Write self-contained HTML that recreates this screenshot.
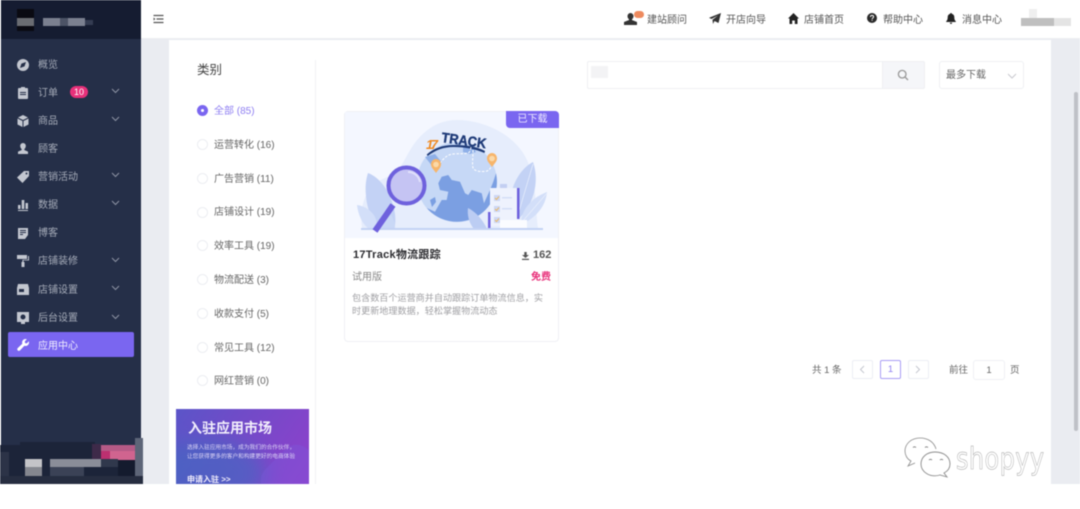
<!DOCTYPE html>
<html lang="zh">
<head>
<meta charset="utf-8">
<style>
*{box-sizing:border-box}
html,body{margin:0;padding:0;width:1080px;height:509px;overflow:hidden;background:#fff;font-family:"Liberation Sans","Noto Sans CJK SC",sans-serif}
.a{position:absolute}
#root{position:relative;width:1080px;height:509px;overflow:hidden;filter:blur(.4px)}
.t{position:absolute;white-space:nowrap;line-height:14px}
.m{color:#a5abb8;font-size:10px;left:38px}
.ic{position:absolute;fill:#c3c7d0}
.ch{position:absolute;left:111px;width:9px;height:6px}
.h{color:#555;font-size:10px}
.c{color:#666;font-size:10px;left:214px}
.r{position:absolute;left:197px;width:11px;height:11px;border-radius:50%;border:1px solid #eceef2;background:#fff}
.pg{position:absolute;top:360px;width:21px;height:19px;border:1px solid #eceef4;border-radius:2px;background:#fff}
</style>
</head>
<body>
<div id="root">
<!-- backgrounds -->
<div class="a" style="left:141px;top:39px;width:939px;height:445px;background:#eaecf1"></div>
<div class="a" style="left:169px;top:40px;width:882px;height:444px;background:#fff"></div>
<div class="a" style="left:141px;top:0;width:939px;height:39px;background:#fff;border-bottom:1px solid #eceef0"></div>
<div class="a" style="left:1074px;top:92px;width:4px;height:339px;border-radius:2px;background:#bfc1c7"></div>

<!-- sidebar -->
<div class="a" style="left:1px;top:0;width:140px;height:484px;background:#252f48"></div>
<div class="a" style="left:1px;top:0;width:140px;height:39px;background:#151c31"></div>
<div class="a" style="left:17px;top:9px;width:17px;height:22px;background:#0a0a12"></div>
<div class="a" style="left:17px;top:18px;width:17px;height:8px;background:#6a6c72"></div>
<div class="a" style="left:43px;top:18px;width:17px;height:8px;background:#7b8090"></div>
<div class="a" style="left:60px;top:18px;width:8px;height:8px;background:#4c5366"></div>
<div class="a" style="left:68px;top:18px;width:17px;height:8px;background:#7b8090"></div>
<div class="a" style="left:85px;top:20px;width:8px;height:5px;background:#343c52"></div>

<!-- sidebar items -->
<svg class="ic" style="left:17px;top:59px" width="12" height="12" viewBox="0 0 12 12"><path fill-rule="evenodd" d="M6 0a6 6 0 1 1 0 12A6 6 0 0 1 6 0zM9 3 4.400 4.600 3 9l4.500-1.600z"/></svg>
<div class="t m" style="top:59px">概览</div>
<svg class="ic" style="left:18px;top:87px" width="10" height="12" viewBox="0 0 10 12"><path fill-rule="evenodd" d="M3 0h4v1h2a1 1 0 0 1 1 1v9a1 1 0 0 1-1 1H1a1 1 0 0 1-1-1V2a1 1 0 0 1 1-1h2zM2 5v1h6V5zm0 2v1h6V7z"/></svg>
<div class="t m" style="top:87px">订单</div>
<div class="a" style="left:70px;top:86px;width:18px;height:12px;border-radius:6px;background:#e8307a;color:#fff;font-size:9px;line-height:12px;text-align:center">10</div>
<svg class="ch" style="top:88px" viewBox="0 0 9 6"><path d="M1 1l3.500 3.500L8 1" fill="none" stroke="#8d93a3" stroke-width="1"/></svg>
<svg class="ic" style="left:17px;top:115px" width="12" height="12" viewBox="0 0 12 12"><path d="M6 0l5 2.500L6 5 1 2.500zM.5 3.500l5 2.500v6L.5 9.500zM11.500 3.500 6.500 6v6l5-2.500z"/></svg>
<div class="t m" style="top:115px">商品</div>
<svg class="ch" style="top:116px" viewBox="0 0 9 6"><path d="M1 1l3.500 3.500L8 1" fill="none" stroke="#8d93a3" stroke-width="1"/></svg>
<svg class="ic" style="left:18px;top:143px" width="10" height="11" viewBox="0 0 10 11"><path d="M5 0a2.800 2.800 0 0 1 2.800 3c0 1.500-.8 2.600-1.500 3.200v.8L10 8.600V11H0V8.600L3.700 7v-.8C3 5.600 2.200 4.500 2.200 3A2.800 2.800 0 0 1 5 0z"/></svg>
<div class="t m" style="top:143px">顾客</div>
<svg class="ic" style="left:17px;top:171px" width="12" height="12" viewBox="0 0 12 12"><path fill-rule="evenodd" d="M7 0h5v5l-6.500 7L0 6.500zM9.500 1.500a1 1 0 1 0 0 2 1 1 0 0 0 0-2z"/></svg>
<div class="t m" style="top:171px">营销活动</div>
<svg class="ch" style="top:172px" viewBox="0 0 9 6"><path d="M1 1l3.500 3.500L8 1" fill="none" stroke="#8d93a3" stroke-width="1"/></svg>
<svg class="ic" style="left:18px;top:199px" width="10" height="12" viewBox="0 0 10 12"><path d="M0 6h2.500v4H0zM3.700 1h2.600v9H3.700zM7.500 4H10v6H7.500zM0 11h10v1H0z"/></svg>
<div class="t m" style="top:199px">数据</div>
<svg class="ch" style="top:200px" viewBox="0 0 9 6"><path d="M1 1l3.500 3.500L8 1" fill="none" stroke="#8d93a3" stroke-width="1"/></svg>
<svg class="ic" style="left:18px;top:228px" width="10" height="11" viewBox="0 0 10 11"><path fill-rule="evenodd" d="M0 0h10v7L7 11H0zM2 2v1h6V2zm0 2v1h6V4zm0 2v1h3V6z"/></svg>
<div class="t m" style="top:227px">博客</div>
<svg class="ic" style="left:17px;top:255px" width="12" height="12" viewBox="0 0 12 12"><path d="M0 0h10v4H0zM11 1h1v4.500H6.500V7H7.500v5h-3V7h.9V4.800H11z"/></svg>
<div class="t m" style="top:255px">店铺装修</div>
<svg class="ch" style="top:257px" viewBox="0 0 9 6"><path d="M1 1l3.500 3.500L8 1" fill="none" stroke="#8d93a3" stroke-width="1"/></svg>
<svg class="ic" style="left:17px;top:284px" width="12" height="11" viewBox="0 0 12 11"><path fill-rule="evenodd" d="M1 0h10l1 4v7H0V4zM2 5v3h5V5z"/></svg>
<div class="t m" style="top:284px">店铺设置</div>
<svg class="ch" style="top:285px" viewBox="0 0 9 6"><path d="M1 1l3.500 3.500L8 1" fill="none" stroke="#8d93a3" stroke-width="1"/></svg>
<svg class="ic" style="left:17px;top:312px" width="12" height="12" viewBox="0 0 12 12"><path fill-rule="evenodd" d="M0 0h12v10H8v2H4v-2H0zM6 2.500a2.500 2.500 0 1 0 0 5 2.500 2.500 0 0 0 0-5z"/></svg>
<div class="t m" style="top:312px">后台设置</div>
<svg class="ch" style="top:314px" viewBox="0 0 9 6"><path d="M1 1l3.500 3.500L8 1" fill="none" stroke="#8d93a3" stroke-width="1"/></svg>

<div class="a" style="left:8px;top:332px;width:126px;height:25px;border-radius:2px;background:#7a66f0"></div>
<svg class="a" style="left:17px;top:339px" width="12" height="12" viewBox="0 0 12 12"><path fill="#fff" d="M8.500 0c.6 0 1 .1 1.400.3L7.800 2.400l.3 1.700 1.700.3 2-2.100c.2.400.2.900.2 1.300a3.400 3.400 0 0 1-4.600 3.200L3 11.400c-.6.600-1.700.6-2.300 0s-.6-1.700 0-2.300l4.600-4.400A3.500 3.500 0 0 1 8.500 0z"/></svg>
<div class="t" style="left:38px;top:340px;color:#f1eeff;font-size:10px">应用中心</div>

<!-- sidebar bottom mosaic -->
<div class="a" style="left:0;top:445px;width:143px;height:39px;background:#1c2439"></div>
<div class="a" style="left:20px;top:442px;width:75px;height:8px;background:#1c2439"></div>
<div class="a" style="left:92px;top:444px;width:9px;height:16px;background:#3e2a49"></div>
<div class="a" style="left:101px;top:445px;width:42px;height:15px;background:#b55a86"></div>
<div class="a" style="left:101px;top:451px;width:9px;height:9px;background:#bc3070"></div>
<div class="a" style="left:110px;top:451px;width:33px;height:9px;background:#d0648f"></div>
<div class="a" style="left:118px;top:460px;width:17px;height:16px;background:#141b2e"></div>
<div class="a" style="left:135px;top:438px;width:8px;height:46px;background:#5d6578"></div>
<div class="a" style="left:0;top:452px;width:9px;height:32px;background:#2c3347"></div>
<div class="a" style="left:25px;top:459px;width:17px;height:8px;background:#c4c4c8"></div>
<div class="a" style="left:25px;top:467px;width:17px;height:9px;background:#85878f"></div>
<div class="a" style="left:50px;top:459px;width:51px;height:8px;background:#8a8d98"></div>
<div class="a" style="left:50px;top:467px;width:34px;height:9px;background:#3b4256"></div>
<div class="a" style="left:101px;top:459px;width:17px;height:8px;background:#30384c"></div>
<div class="a" style="left:0;top:476px;width:143px;height:8px;background:#262d40"></div>

<!-- header -->
<svg class="a" style="left:153px;top:14px" width="11" height="10" viewBox="0 0 10 10"><path d="M0 1.500h10M3 5h7M0 8.500h10" stroke="#555" stroke-width="1.300" fill="none"/><path d="M0 3.500 2 5 0 6.500z" fill="#555"/></svg>

<svg class="a" style="left:624px;top:13px" width="13" height="12" viewBox="0 0 13 12"><path fill="#333" d="M6.500 0a3 3 0 0 1 3 3.200c0 1.300-.7 2.500-1.500 3v.8l5 2V12H0V9l5-2v-.8c-.8-.5-1.500-1.700-1.500-3A3 3 0 0 1 6.500 0z"/></svg>
<div class="a" style="left:634px;top:11px;width:10px;height:7px;border-radius:4px;background:#ee8a5e"></div>
<div class="t h" style="left:647px;top:14px">建站顾问</div>
<svg class="a" style="left:709px;top:13px" width="12" height="11" viewBox="0 0 12 11"><path fill="#333" d="M12 0 9.500 10 5.500 8 4 11 3.500 6.800 9 2.500 2.500 6 0 4.800z"/></svg>
<div class="t h" style="left:726px;top:14px">开店向导</div>
<svg class="a" style="left:788px;top:13px" width="11" height="11" viewBox="0 0 11 11"><path fill="#222" d="M5.500 0 11 5.500H9.500V11H6.800V7.500H4.200V11H1.500V5.500H0z"/></svg>
<div class="t h" style="left:804px;top:14px">店铺首页</div>
<svg class="a" style="left:867px;top:13px" width="10" height="10" viewBox="0 0 10 10"><circle cx="5" cy="5" r="5" fill="#2a2a2a"/><path d="M3.400 3.900C3.500 2.900 4.100 2.400 5 2.400s1.600.6 1.600 1.400c0 1.200-1.500 1.200-1.500 2.300" fill="none" stroke="#fff" stroke-width="1"/><rect x="4.600" y="6.800" width="1" height="1" fill="#fff"/></svg>
<div class="t h" style="left:883px;top:14px">帮助中心</div>
<svg class="a" style="left:946px;top:13px" width="10" height="11" viewBox="0 0 10 11"><path fill="#222" d="M5 0c.5 0 .8.300.8.800C7.400 1.200 8.300 2.500 8.300 4c0 2.500.6 3.500 1.500 4.300V9H.2v-.7C1.100 7.500 1.700 6.500 1.700 4 1.700 2.500 2.600 1.200 4.200.8 4.200.3 4.500 0 5 0zM3.800 9.600h2.400C6.100 10.400 5.600 11 5 11s-1.100-.6-1.200-1.400z"/></svg>
<div class="t h" style="left:962px;top:14px">消息中心</div>
<div class="a" style="left:1021px;top:18px;width:33px;height:8px;background:#bfbfbf"></div>
<div class="a" style="left:1029px;top:9px;width:8px;height:9px;background:#efefef"></div>
<div class="a" style="left:1054px;top:18px;width:17px;height:8px;background:#e4e4e4"></div>

<!-- category column -->
<div class="a" style="left:315px;top:60px;width:1px;height:424px;background:#f1f2f4"></div>
<div class="t" style="left:197px;top:63px;color:#444;font-size:12.500px">类别</div>

<div class="a" style="left:197px;top:105px;width:11px;height:11px;border-radius:50%;background:#7a66f0"></div>
<div class="a" style="left:201px;top:109px;width:3px;height:3px;border-radius:50%;background:#fff"></div>
<div class="t" style="left:214px;top:105px;color:#8f7ff2;font-size:10px">全部 (85)</div>
<div class="r" style="top:139px"></div><div class="t c" style="top:139px">运营转化 (16)</div>
<div class="r" style="top:173px"></div><div class="t c" style="top:173px">广告营销 (11)</div>
<div class="r" style="top:207px"></div><div class="t c" style="top:206px">店铺设计 (19)</div>
<div class="r" style="top:240px"></div><div class="t c" style="top:240px">效率工具 (19)</div>
<div class="r" style="top:274px"></div><div class="t c" style="top:274px">物流配送 (3)</div>
<div class="r" style="top:308px"></div><div class="t c" style="top:308px">收款支付 (5)</div>
<div class="r" style="top:342px"></div><div class="t c" style="top:342px">常见工具 (12)</div>
<div class="r" style="top:375px"></div><div class="t c" style="top:375px">网红营销 (0)</div>

<!-- banner -->
<div class="a" style="left:176px;top:409px;width:133px;height:75px;overflow:hidden;background:linear-gradient(125deg,#5b55c8 0%,#6f4cc8 35%,#9040cc 100%)">
  <div class="a" style="left:-30px;top:30px;width:120px;height:70px;background:#3d6cc0;opacity:.6;border-radius:50%;filter:blur(10px)"></div>
  <div class="a" style="left:92px;top:38px;width:50px;height:60px;background:#7a5cdc;opacity:.35;border-radius:16px;transform:rotate(45deg)"></div>
  <div class="t" style="left:12px;top:10px;color:#f2eefc;font-size:14px;font-weight:bold;line-height:18px">入驻应用市场</div>
  <div class="t" style="left:11px;top:34px;color:#dcd4f5;font-size:5.700px;line-height:10px">选择入驻应用市场，成为我们的合作伙伴，</div>
  <div class="t" style="left:11px;top:43px;color:#dcd4f5;font-size:5.700px;line-height:10px">让您获得更多的客户和构建更好的电商体验</div>
  <div class="t" style="left:11px;top:65px;color:#f2eefc;font-size:8px;font-weight:bold;line-height:12px">申请入驻 &gt;&gt;</div>
</div>

<!-- search row -->
<div class="a" style="left:587px;top:61px;width:296px;height:28px;border:1px solid #eff0f3;border-right:0;border-radius:2px 0 0 2px;background:#fff"></div>
<div class="a" style="left:591px;top:66px;width:17px;height:12px;background:#f3f3f5"></div>
<div class="a" style="left:882px;top:61px;width:43px;height:28px;border:1px solid #eff0f3;border-radius:0 2px 2px 0;background:#f5f6f9"></div>
<svg class="a" style="left:897px;top:69px" width="12" height="12" viewBox="0 0 12 12"><circle cx="5.200" cy="5.200" r="3.800" fill="none" stroke="#999" stroke-width="1.300"/><path d="M8 8l3 3" stroke="#999" stroke-width="1.300"/></svg>
<div class="a" style="left:939px;top:61px;width:85px;height:28px;border:1px solid #eff0f3;border-radius:3px;background:#fff"></div>
<div class="t" style="left:946px;top:69px;color:#666;font-size:10px">最多下载</div>
<svg class="a" style="left:1007px;top:73px" width="10" height="6" viewBox="0 0 10 6"><path d="M1 1l4 4 4-4" fill="none" stroke="#c9c9cf" stroke-width="1"/></svg>

<!-- card -->
<div class="a" style="left:344px;top:111px;width:215px;height:231px;border:1px solid #eff0f5;border-radius:4px;background:#fff"></div>
<svg class="a" style="left:345px;top:112px" width="213" height="126" viewBox="0 0 213 126">
  <rect width="213" height="126" fill="#f4f7ff"/>
  <!-- blob -->
  <path d="M17 116C14 95 20 74 40 66 55 60 58 50 64 40 74 22 90 8 112 8c26 0 58 14 70 40 10 22 8 47 11 68z" fill="#e6edfc"/>
  <!-- left leaves -->
  <path d="M23 61c11 4 21 17 25 32 3 10 3 18 1 24H36C27 110 22 97 21 84c-1-9 0-17 2-23z" fill="#c3d2f5"/>
  <path d="M12 93c8 1 15 6 18 12 2 4 2 8 2 12H24c-7-5-11-15-12-24z" fill="#d3dff9"/>
  <path d="M40 98c6 3 10 9 10 19H36c-1-7 0-14 4-19z" fill="#c9d8f6"/>
  <!-- right leaves -->
  <path d="M188 50c4 11 4 26-2 39-3 8-8 14-14 19-6-8-8-19-5-29 3-12 11-24 21-29z" fill="#c3d2f5"/>
  <path d="M202 80c-1 11-7 20-15 26-4 3-7 5-11 6 0-9 4-17 11-23 4-4 10-7 15-9z" fill="#d3dff9"/>
  <path d="M188 52 172 106M202 81 177 110" stroke="#e9effd" stroke-width=".7" fill="none"/>
  <!-- globe -->
  <circle cx="112" cy="70" r="40" fill="#c6d8f6"/>
  <path d="M95 78l-1.700-6.700 3.400-6.600 6.600-1.700 3.400 5 8.300 1.700 5 11.600 3.300 1.700 3.400-5 10 3.300 2.300 10 6-13.300 3.300-8.300 2.700-8.400A40 40 0 0 1 81.700 96l8.300 3.700 6.700-11.700h5l1.600-8.300z" fill="#7b9fe2"/>
  <path d="M80 45l10-3 6.700 8.300L93.300 58l-5-1.700-3.300-5z" fill="#8fb0e8"/>
  <path d="M118 35l10 0 3 5-6 2-7-2z" fill="#8fb0e8"/>
  <path d="M85 88l5-3 1 5-4 5z" fill="#7b9fe2"/>
  <path d="M81.700 42.500C89 36 98 33 108 33c12 0 23 1 32 6l-.5 2c-9-4-20-6-31-6-10 0-18 3-25.800 9z" fill="#1e3a78"/>
  <!-- dashed routes -->
  <path d="M95 51.500c4-6 8-9 13-9.500 6-.5 12 0 15-1 3-1 3-6 3-9M128 38c0 8-1 14 0 18 2 4 10 4 14 3 2-1 3-2 4-4" fill="none" stroke="#fff" stroke-width="1" stroke-dasharray="2.500 1.500"/>
  <!-- pins -->
  <path d="M91 47c3 0 5 2.500 5 5.500S93 58 91 61c-2-3-5-5.500-5-8.500S88 47 91 47z" fill="#f7b56b"/>
  <circle cx="91" cy="52.500" r="2.800" fill="#fbd9a8"/>
  <path d="M147 41c3 0 5 2.500 5 5.500s-3 5.500-5 8.500c-2-3-5-5.500-5-8.500s2-5.500 5-5.500z" fill="#f7b56b"/>
  <circle cx="147" cy="46.500" r="2.800" fill="#fbd9a8"/>
  <!-- logo -->
  <text x="81" y="37" font-family="Liberation Sans" font-size="13" font-weight="bold" font-style="italic" fill="#ef8a22" textLength="12">17</text>
  <text x="96" y="30" font-family="Liberation Sans" font-size="14" font-weight="bold" fill="#1e3a78" stroke="#1e3a78" stroke-width=".4" textLength="45" lengthAdjust="spacingAndGlyphs" transform="rotate(8 96 30)">TRACK</text>
  <!-- clipboard -->
  <rect x="145" y="76" width="28" height="38" fill="#eef2fd"/>
  <rect x="172" y="76" width="2.500" height="31" fill="#6e61dd"/>
  <rect x="143" y="100" width="2.500" height="16" fill="#6e61dd"/>
  <rect x="155" y="72" width="7" height="4" fill="#c3cff2"/>
  <rect x="149" y="83" width="6" height="6" fill="#cdd7f4"/><rect x="149" y="94" width="6" height="6" fill="#cdd7f4"/><rect x="149" y="105" width="6" height="6" fill="#cdd7f4"/>
  <path d="M150 86l1.500 1.500 2.500-3M150 97l1.500 1.500 2.500-3M150 108l1.500 1.500 2.500-3" stroke="#e9b96a" stroke-width="1" fill="none"/>
  <path d="M157 85h10v1.500h-10zM157 96h10v1.500h-10z" fill="#d4def6"/>
  <rect x="155" y="108" width="27" height="8" fill="#fbfcff"/>
  <path d="M123 96c8 4 15 12 19 21h-13c-5-6-7-14-6-21z" fill="#bccdf3"/>
  <!-- ground -->
  <rect x="16" y="116" width="182" height="2" fill="#c3d2f4"/>
  <!-- magnifier -->
  <path d="M48 93 30 119" stroke="#6e61dd" stroke-width="6" fill="none"/>
  <circle cx="61.500" cy="73.500" r="18" fill="#c5c4f3" stroke="#6e61dd" stroke-width="4"/>
  <path d="M63 60c6 0 11 4 12 10" stroke="#e1e0fb" stroke-width="2" fill="none"/>
</svg>
<div class="a" style="left:506px;top:111px;width:53px;height:17px;background:#7a66f0;border-radius:0 4px 0 4px;color:#eeeaff;font-size:10px;line-height:18px;text-align:center">已下载</div>
<div class="t" style="left:353px;top:248px;color:#2c2c30;font-size:11px;font-weight:bold;letter-spacing:.27px">17Track物流跟踪</div>
<svg class="a" style="left:522px;top:252px" width="7" height="8" viewBox="0 0 7 8"><path d="M2.300 0h2.400v3H7L3.500 6 0 3h2.300zM0 6.800h7V8H0z" fill="#555"/></svg>
<div class="t" style="left:533px;top:248px;color:#555;font-size:11px;font-weight:bold">162</div>
<div class="t" style="left:352px;top:271px;color:#888;font-size:10px">试用版</div>
<div class="t" style="left:531px;top:271px;color:#e8307a;font-size:10px;font-weight:bold">免费</div>
<div class="t" style="left:352px;top:292px;color:#a0a0a4;font-size:9.100px;line-height:13px">包含数百个运营商并自动跟踪订单物流信息，实</div>
<div class="t" style="left:352px;top:305px;color:#a0a0a4;font-size:9.100px;line-height:13px">时更新地理数据，轻松掌握物流动态</div>

<!-- pagination -->
<div class="t" style="left:812px;top:364px;color:#666;font-size:9.500px">共 1 条</div>
<div class="pg" style="left:852px"></div>
<svg class="a" style="left:859px;top:365px" width="6" height="9" viewBox="0 0 6 9"><path d="M5 1 1.500 4.500 5 8" fill="none" stroke="#c5c7d0" stroke-width="1"/></svg>
<div class="pg" style="left:880px;border-color:#a99df5;color:#8f7ff2;font-size:9.500px;line-height:18px;text-align:center">1</div>
<div class="pg" style="left:908px"></div>
<svg class="a" style="left:915px;top:365px" width="6" height="9" viewBox="0 0 6 9"><path d="M1 1 4.500 4.500 1 8" fill="none" stroke="#c5c7d0" stroke-width="1"/></svg>
<div class="t" style="left:949px;top:364px;color:#666;font-size:9.500px">前往</div>
<div class="a" style="left:973px;top:360px;width:32px;height:20px;border:1px solid #eff0f4;border-radius:3px;color:#666;font-size:9.500px;line-height:19px;text-align:center">1</div>
<div class="t" style="left:1010px;top:364px;color:#666;font-size:9.500px">页</div>

<!-- watermark -->
<svg class="a" style="left:903px;top:436px" width="50" height="42" viewBox="0 0 50 42">
  <path d="M17 2C8 2 2 8 2 15c0 4 2 8 6 10l-3 5 7-3" fill="#fff" stroke="#8c8c8c" stroke-width=".8"/>
  <path d="M17 2c8 0 14 4 16 11" fill="none" stroke="#8c8c8c" stroke-width=".8"/>
  <path d="M32 16c9 0 15 5 15 12 0 4-2 7-6 9l3 4-7-2c-10 3-19-3-19-11 0-7 6-12 14-12z" fill="#fff" stroke="#8c8c8c" stroke-width=".9"/>
  <path d="M10 11.500a2 2 0 0 1 3 0M22 11.500a2 2 0 0 1 3 0M26 24a2 2 0 0 1 3 0M37 24a2 2 0 0 1 3 0" fill="none" stroke="#777" stroke-width=".9"/>
</svg>
<div class="t" style="left:956px;top:443px;color:#fff;font-size:30px;line-height:34px;letter-spacing:.5px;font-family:'DejaVu Sans',sans-serif;-webkit-text-stroke:.45px #9a9a9a;transform-origin:left top;transform:scaleX(.8)">shopyy</div>
</div>
</body>
</html>
